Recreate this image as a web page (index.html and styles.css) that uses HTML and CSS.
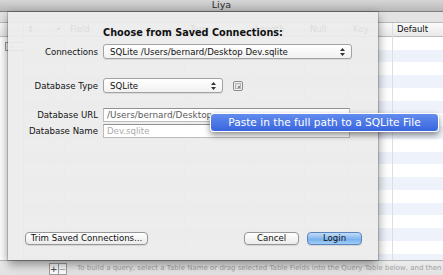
FILE: index.html
```html
<!DOCTYPE html>
<html lang="en">
<head>
  <meta charset="UTF-8" />
  <title>Liya</title>
  <link rel="stylesheet" href="styles.css">
</head>
<body>
  <div class="window">
    <div class="titlebar">Liya</div>
    <div class="toolbar"></div>

    <div class="content">
      <div class="sidebar">
        <div class="side-head"></div>
        <div class="nav-box"><span>&lsaquo;</span><span>&rsaquo;</span></div>
      </div>
      <div class="table">
        <div class="col c1"><div class="col-head">&#8597;</div></div>
        <div class="col c2"><div class="col-head">&bull;</div></div>
        <div class="col c3"><div class="col-head">Field</div></div>
        <div class="col c4"><div class="col-head">Type</div></div>
        <div class="col c5"><div class="col-head">Length</div></div>
        <div class="col c6"><div class="col-head">Null</div></div>
        <div class="col c7"><div class="col-head">Key</div></div>
        <div class="col c8"><div class="col-head">Default</div></div>
      </div>
    </div>

    <div class="statusbar">
      <span class="sb-btn">+</span><span class="sb-btn">&minus;</span>
      <span class="hint">To build a query, select a Table Name or drag selected Table Fields into the Query Table below, and then run it.</span>
    </div>

    <!-- connection sheet -->
    <div class="sheet">
      <div class="sheet-title">Choose from Saved Connections:</div>

      <div class="row row-conn">
        <span class="label">Connections</span>
        <div class="popup popup-conn">
          <span>SQLite /Users/bernard/Desktop Dev.sqlite</span>
          <svg class="arrows" width="5" height="8" viewBox="0 0 5 8"><path d="M2.5 0 L5 3 L0 3 Z M0 5 L5 5 L2.5 8 Z" fill="#333"/></svg>
        </div>
      </div>

      <div class="row row-type">
        <span class="label">Database Type</span>
        <div class="popup popup-type">
          <span>SQLite</span>
          <svg class="arrows" width="5" height="8" viewBox="0 0 5 8"><path d="M2.5 0 L5 3 L0 3 Z M0 5 L5 5 L2.5 8 Z" fill="#333"/></svg>
        </div>
        <svg class="type-icon" width="10" height="10" viewBox="0 0 10 10">
          <rect x="0.5" y="0.5" width="9" height="9" rx="1.5" fill="#f2f2f2" stroke="#8a8a8a"/>
          <rect x="2.5" y="2.5" width="5" height="5" fill="#e4e4e4" stroke="#b4b4b4"/>
          <rect x="5" y="5" width="2" height="2" fill="#8c8c8c"/>
        </svg>
      </div>

      <div class="row row-url">
        <span class="label">Database URL</span>
        <div class="field">/Users/bernard/Desktop</div>
      </div>

      <div class="row row-name">
        <span class="label">Database Name</span>
        <div class="field placeholder">Dev.sqlite</div>
      </div>

      <div class="actions">
        <button class="btn btn-trim">Trim Saved Connections...</button>
        <button class="btn btn-cancel">Cancel</button>
        <button class="btn btn-login">Login</button>
      </div>
    </div>

    <div class="tooltip">Paste in the full path to a SQLite File</div>
  </div>
</body>
</html>
```

FILE: styles.css
```css
* {
  box-sizing: border-box;
}

body {
  margin: 0;
  font-family: 'DejaVu Sans', sans-serif;
  background: #fff;
}

.window {
  position: relative;
  width: 443px;
  height: 275px;
  overflow: hidden;
  display: flex;
  flex-direction: column;
  background: #fff;
}

.titlebar {
  flex: none;
  height: 12px;
  background: linear-gradient(#d6d6d6, #b8b8b8);
  border-bottom: 1px solid #7f7f7f;
  font-size: 9.5px;
  line-height: 10px;
  text-align: center;
  color: #2b2b2b;
}

.toolbar {
  flex: none;
  height: 11px;
  background: #e3e3e3;
  border-bottom: 1px solid #b9b9b9;
}

/* background table */
.content {
  flex: 1;
  display: flex;
  min-height: 0;
}

.sidebar {
  width: 24px;
  flex: none;
  background: #fff;
  border-right: 1px solid #c9c9c9;
}

.side-head {
  height: 14px;
  background: linear-gradient(#fbfbfb, #e8e8e8);
  border-bottom: 1px solid #bdbdbd;
}

.nav-box {
  display: flex;
  width: 28px;
  height: 9px;
  margin: 5px 0 0 5px;
  border: 1px solid #9a9a9a;
  background: #f6f6f6;
  font-size: 8px;
  line-height: 7px;
  color: #888;
}

.nav-box span {
  flex: 1;
  text-align: center;
}

.table {
  flex: 1;
  display: flex;
  background: repeating-linear-gradient(#fff 0 12.75px, #edf2fb 12.75px 25.5px);
  background-position: 0 14px;
}

.col {
  flex: none;
  border-right: 1px solid #dedede;
}

.col-head {
  height: 14px;
  padding-left: 5px;
  background: linear-gradient(#fbfbfb, #e9e9e9);
  border-bottom: 1px solid #bdbdbd;
  font-size: 8.5px;
  line-height: 13px;
  color: #111;
  white-space: nowrap;
}

.c1 { width: 26px; }
.c1 .col-head { padding-left: 3px; }
.c2 { width: 15px; }
.c2 .col-head { padding-left: 6px; }
.c3 { width: 120px; }
.c4 { width: 65px; }
.c5 { width: 55px; }
.c6 { width: 43px; }
.c7 { width: 45px; }
.c8 { flex: 1; border-right: none; }
.c8 .col-head { padding-left: 4px; }

.statusbar {
  flex: none;
  height: 15px;
  display: flex;
  align-items: flex-end;
  padding-left: 49px;
  background: linear-gradient(#ececec, #e2e2e2);
  border-top: 1px solid #b4b4b4;
}

.sb-btn {
  width: 12px;
  height: 12px;
  border: 1px solid #9e9e9e;
  background: #fbfbfb;
  font-size: 9px;
  line-height: 10px;
  text-align: center;
  color: #333;
}

.sb-btn + .sb-btn {
  width: 11px;
  border-left: none;
  color: #999;
}

.hint {
  align-self: center;
  margin-left: 10px;
  font-size: 7px;
  color: #a2a2a2;
  white-space: nowrap;
}

/* sheet */
.sheet {
  position: absolute;
  left: 8px;
  top: 12px;
  width: 370px;
  height: 248px;
  display: flex;
  flex-direction: column;
  padding: 15px 0;
  background: rgba(236, 236, 236, 0.92);
  box-shadow: 0 0 0 1px rgba(0, 0, 0, 0.16), 0 4px 10px rgba(0, 0, 0, 0.45);
  color: #111;
  font-size: 8.6px;
}

.sheet-title {
  font-weight: bold;
  font-size: 9.7px;
  line-height: 12px;
  text-align: center;
}

.row {
  display: flex;
  align-items: center;
}

.label {
  width: 90px;
  margin-right: 5px;
  text-align: right;
  white-space: nowrap;
}

.row-conn { margin-top: 5px; }
.row-type { margin-top: 19px; }
.row-url { margin-top: 15px; }
.row-name { margin-top: 2px; }

.popup {
  height: 15px;
  display: flex;
  align-items: center;
  justify-content: space-between;
  padding: 0 6px 0 6px;
  border: 1px solid #a2a2a2;
  border-radius: 3px;
  background: linear-gradient(#ffffff, #f1f1f1);
  box-shadow: 0 1px 0 rgba(0, 0, 0, 0.08);
  white-space: nowrap;
}

.popup-conn { width: 249px; }
.popup-type { width: 120px; }

.type-icon {
  margin-left: 10px;
}

.field {
  width: 247px;
  height: 14px;
  padding-left: 3px;
  border: 1px solid #bcbcbc;
  border-top-color: #929292;
  background: #fff;
  font-size: 8.9px;
  line-height: 12px;
  color: #5a5a5a;
  white-space: nowrap;
  overflow: hidden;
}

.field.placeholder {
  font-size: 8.6px;
  color: #ababab;
}

.actions {
  margin-top: auto;
  display: flex;
  padding: 0 16px 0 17px;
}

.btn {
  height: 13px;
  padding: 0;
  border: 1px solid #969696;
  border-radius: 4px;
  background: linear-gradient(#ffffff, #ebebeb);
  box-shadow: 0 1px 1px rgba(0, 0, 0, 0.1);
  font-family: inherit;
  font-size: 8.6px;
  line-height: 11px;
  color: #111;
}

.btn-trim { width: 123px; }
.btn-cancel { width: 55px; margin-left: auto; }

.btn-login {
  width: 55px;
  margin-left: 8px;
  border-color: #5a84bf;
  background: linear-gradient(#c4dcf7, #86baef 50%, #74aeed 52%, #a2cdf5);
}

.tooltip {
  position: absolute;
  left: 210px;
  top: 113px;
  width: 229px;
  height: 19px;
  border: 1px solid #fff;
  border-radius: 4px;
  background: linear-gradient(#628cee, #3865de);
  box-shadow: 0 3px 6px rgba(0, 0, 0, 0.45);
  font-size: 10.6px;
  line-height: 17px;
  text-align: center;
  color: #fff;
  white-space: nowrap;
}
```
